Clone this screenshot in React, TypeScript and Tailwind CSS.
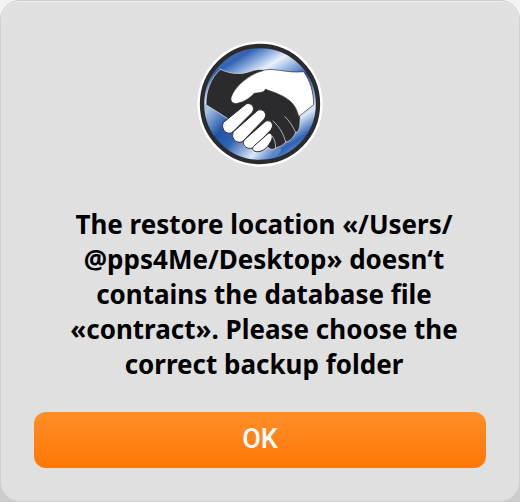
function HandshakeLogo() {
  return (
    <svg viewBox="21 21 378 378" className="size-[126px]" role="img" aria-label="Handshake">
      <defs>
        <linearGradient id="sky" gradientUnits="userSpaceOnUse" x1="110" y1="50" x2="310" y2="370">
          <stop offset="0" stopColor="#4a79c0" />
          <stop offset="0.1" stopColor="#3263b2" />
          <stop offset="0.18" stopColor="#7fa3d8" />
          <stop offset="0.28" stopColor="#eaf1fa" />
          <stop offset="0.38" stopColor="#8fb0de" />
          <stop offset="0.5" stopColor="#2457a9" />
          <stop offset="0.62" stopColor="#6d93cd" />
          <stop offset="0.76" stopColor="#dce8f7" />
          <stop offset="0.9" stopColor="#2e62b3" />
          <stop offset="1" stopColor="#7c9fd4" />
        </linearGradient>
        <linearGradient id="lower" gradientUnits="userSpaceOnUse" x1="60" y1="220" x2="235" y2="375">
          <stop offset="0" stopColor="#a9c2e4" />
          <stop offset="0.3" stopColor="#1f54a8" />
          <stop offset="0.5" stopColor="#2f62b2" />
          <stop offset="0.82" stopColor="#dbe7f6" />
          <stop offset="1" stopColor="#5d88c8" />
        </linearGradient>
      </defs>
      <circle cx="210" cy="210" r="188" fill="#fff" />
      <circle cx="210" cy="210" r="174" fill="url(#sky)" />
      <path d="M42 206 C42 300 110 378 205 378 C245 378 265 370 275 345 L180 320 L90 240 Z" fill="url(#lower)" />
      <g strokeLinejoin="round" strokeLinecap="round">
        <path
          d="M91 106 C125 122 155 122 185 111 C200 106 213 105 224 108 L300 190 C325 208 333 232 330 262 C330 280 328 293 317 296 C310 310 301 322 287 324 C276 338 264 338 257 343 C245 350 235 345 228 330 L117 256 L48 212 C48 168 63 132 91 106 Z"
          fill="#2b2b2d"
          stroke="#dfe7f2"
          strokeWidth="2"
        />
        <path
          d="M214 111 C248 97 285 119 341 113 C360 139 371 174 371 212 L326 248 C319 213 298 195 269 182 C249 174 241 171 226 166 C223 176 209 176 193 178 C181 191 163 204 143 208 C128 211 119 201 124 188 C133 162 169 125 214 111 Z"
          fill="#fff"
          stroke="#2b2b2d"
          strokeWidth="2"
        />
        <path d="M170 209 C184 205 197 220 187 235 L129 293 C115 307 91 289 99 267 Z" fill="#fff" stroke="#2b2b2d" strokeWidth="3" />
        <path d="M205 228 C220 223 234 239 223 255 L161 319 C146 335 119 315 130 294 Z" fill="#fff" stroke="#2b2b2d" strokeWidth="3" />
        <path d="M228 261 C243 256 254 272 243 287 L194 338 C180 352 151 336 162 319 Z" fill="#fff" stroke="#2b2b2d" strokeWidth="3" />
        <path d="M234 299 C244 293 252 308 242 323 C230 345 211 359 193 351 C186 347 187 342 191 337 Z" fill="#fff" stroke="#2b2b2d" strokeWidth="3" />
        <g fill="none" stroke="#f4f4f4" strokeWidth="2">
          <path d="M285 248 C298 260 309 278 317 296" />
          <path d="M249 261 C270 279 281 302 287 324" />
          <path d="M246 306 C253 313 257 326 257 342" />
        </g>
      </g>
      <circle cx="210" cy="210" r="174" fill="none" stroke="#2b2b2d" strokeWidth="13" />
    </svg>
  );
}

export default function App() {
  return (
    <div className="min-h-screen bg-linear-to-b from-[#f4f4f4] to-[#cccccc]">
      <main
        role="alertdialog"
        aria-describedby="message"
        className="flex min-h-screen flex-col items-center rounded-[20px] border border-[#cfcfcf] bg-[#e0e0e0] px-[33px] pt-10 pb-[33px] shadow-[inset_0_1px_1px_#efefef]"
      >
        <HandshakeLogo />
        <p
          id="message"
          className="mt-10 pl-2 text-center font-['Noto_Sans',sans-serif] text-[26px] leading-[35px] font-bold whitespace-nowrap text-black"
        >
          The restore location «/Users/
          <br />
          @pps4Me/Desktop» doesn‘t
          <br />
          contains the database file
          <br />
          «contract». Please choose the
          <br />
          correct backup folder
        </p>
        <button
          type="button"
          className="mt-auto h-14 w-full rounded-xl bg-linear-to-b from-[#ff8e26] to-[#ff7600] pb-0.5 font-[Roboto,sans-serif] text-[27px] font-medium text-white"
        >
          OK
        </button>
      </main>
    </div>
  );
}
